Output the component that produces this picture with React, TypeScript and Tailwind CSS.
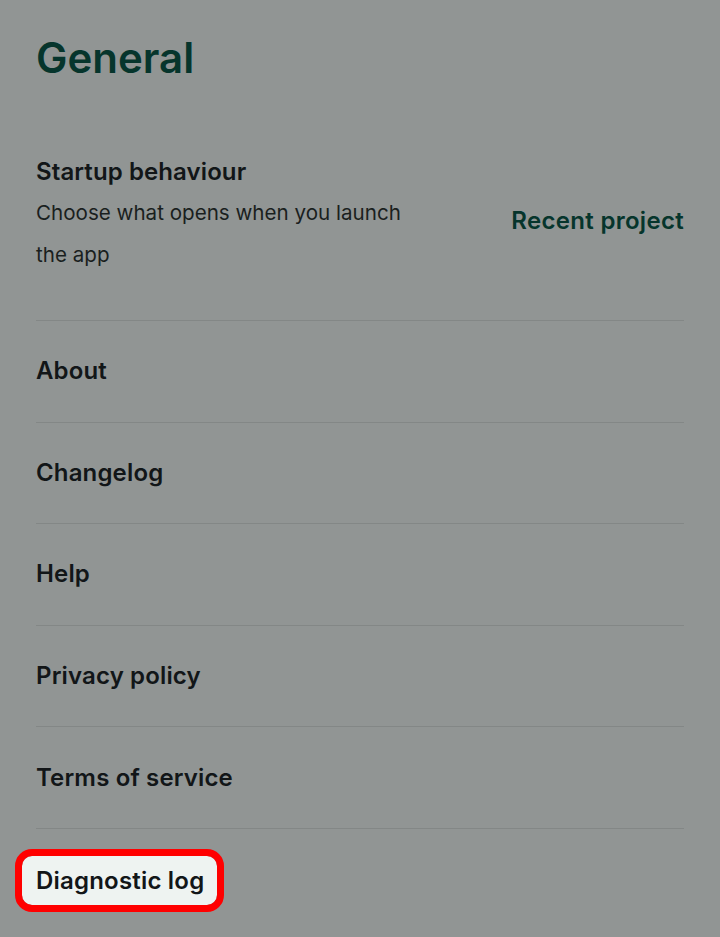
const items = ["About", "Changelog", "Help", "Privacy policy", "Terms of service"];

export default function App() {
  return (
    <div
      className="min-h-[937px] w-full bg-[#919594] px-9 pt-[34px] text-[#121618]"
      style={{ fontFamily: "Inter, 'Noto Sans', sans-serif" }}
    >
      <h1 className="text-[42px] font-semibold leading-[48px] text-[#06352c]">General</h1>

      <div className="mt-[76px] flex items-center justify-between border-b border-[#838786] pb-[44px]">
        <div className="max-w-[395px]">
          <div className="text-[24px] font-semibold leading-[28px] tracking-[0.1px]">Startup behaviour</div>
          <p className="mt-[6px] text-[20.6px] leading-[42px] text-[#1a1f1e]">
            Choose what opens when you launch the app
          </p>
        </div>
        <div className="mt-[8px] text-[24px] font-semibold tracking-[0.3px] text-[#06352c]">Recent project</div>
      </div>

      {items.map((label) => (
        <div
          key={label}
          className="border-b border-[#838786] py-[35.3px] text-[24px] font-semibold leading-[30px] tracking-[0.15px]"
        >
          {label}
        </div>
      ))}

      <div className="pt-[27px]">
        <span className="-ml-[14px] inline-block rounded-[10px] bg-[#eef3f1] py-[10.6px] pl-[14px] pr-[13px] text-[24px] font-semibold leading-[28px] tracking-[0.2px] outline-[7px] outline-[#ff0000] outline-solid">
          Diagnostic log
        </span>
      </div>
    </div>
  );
}
